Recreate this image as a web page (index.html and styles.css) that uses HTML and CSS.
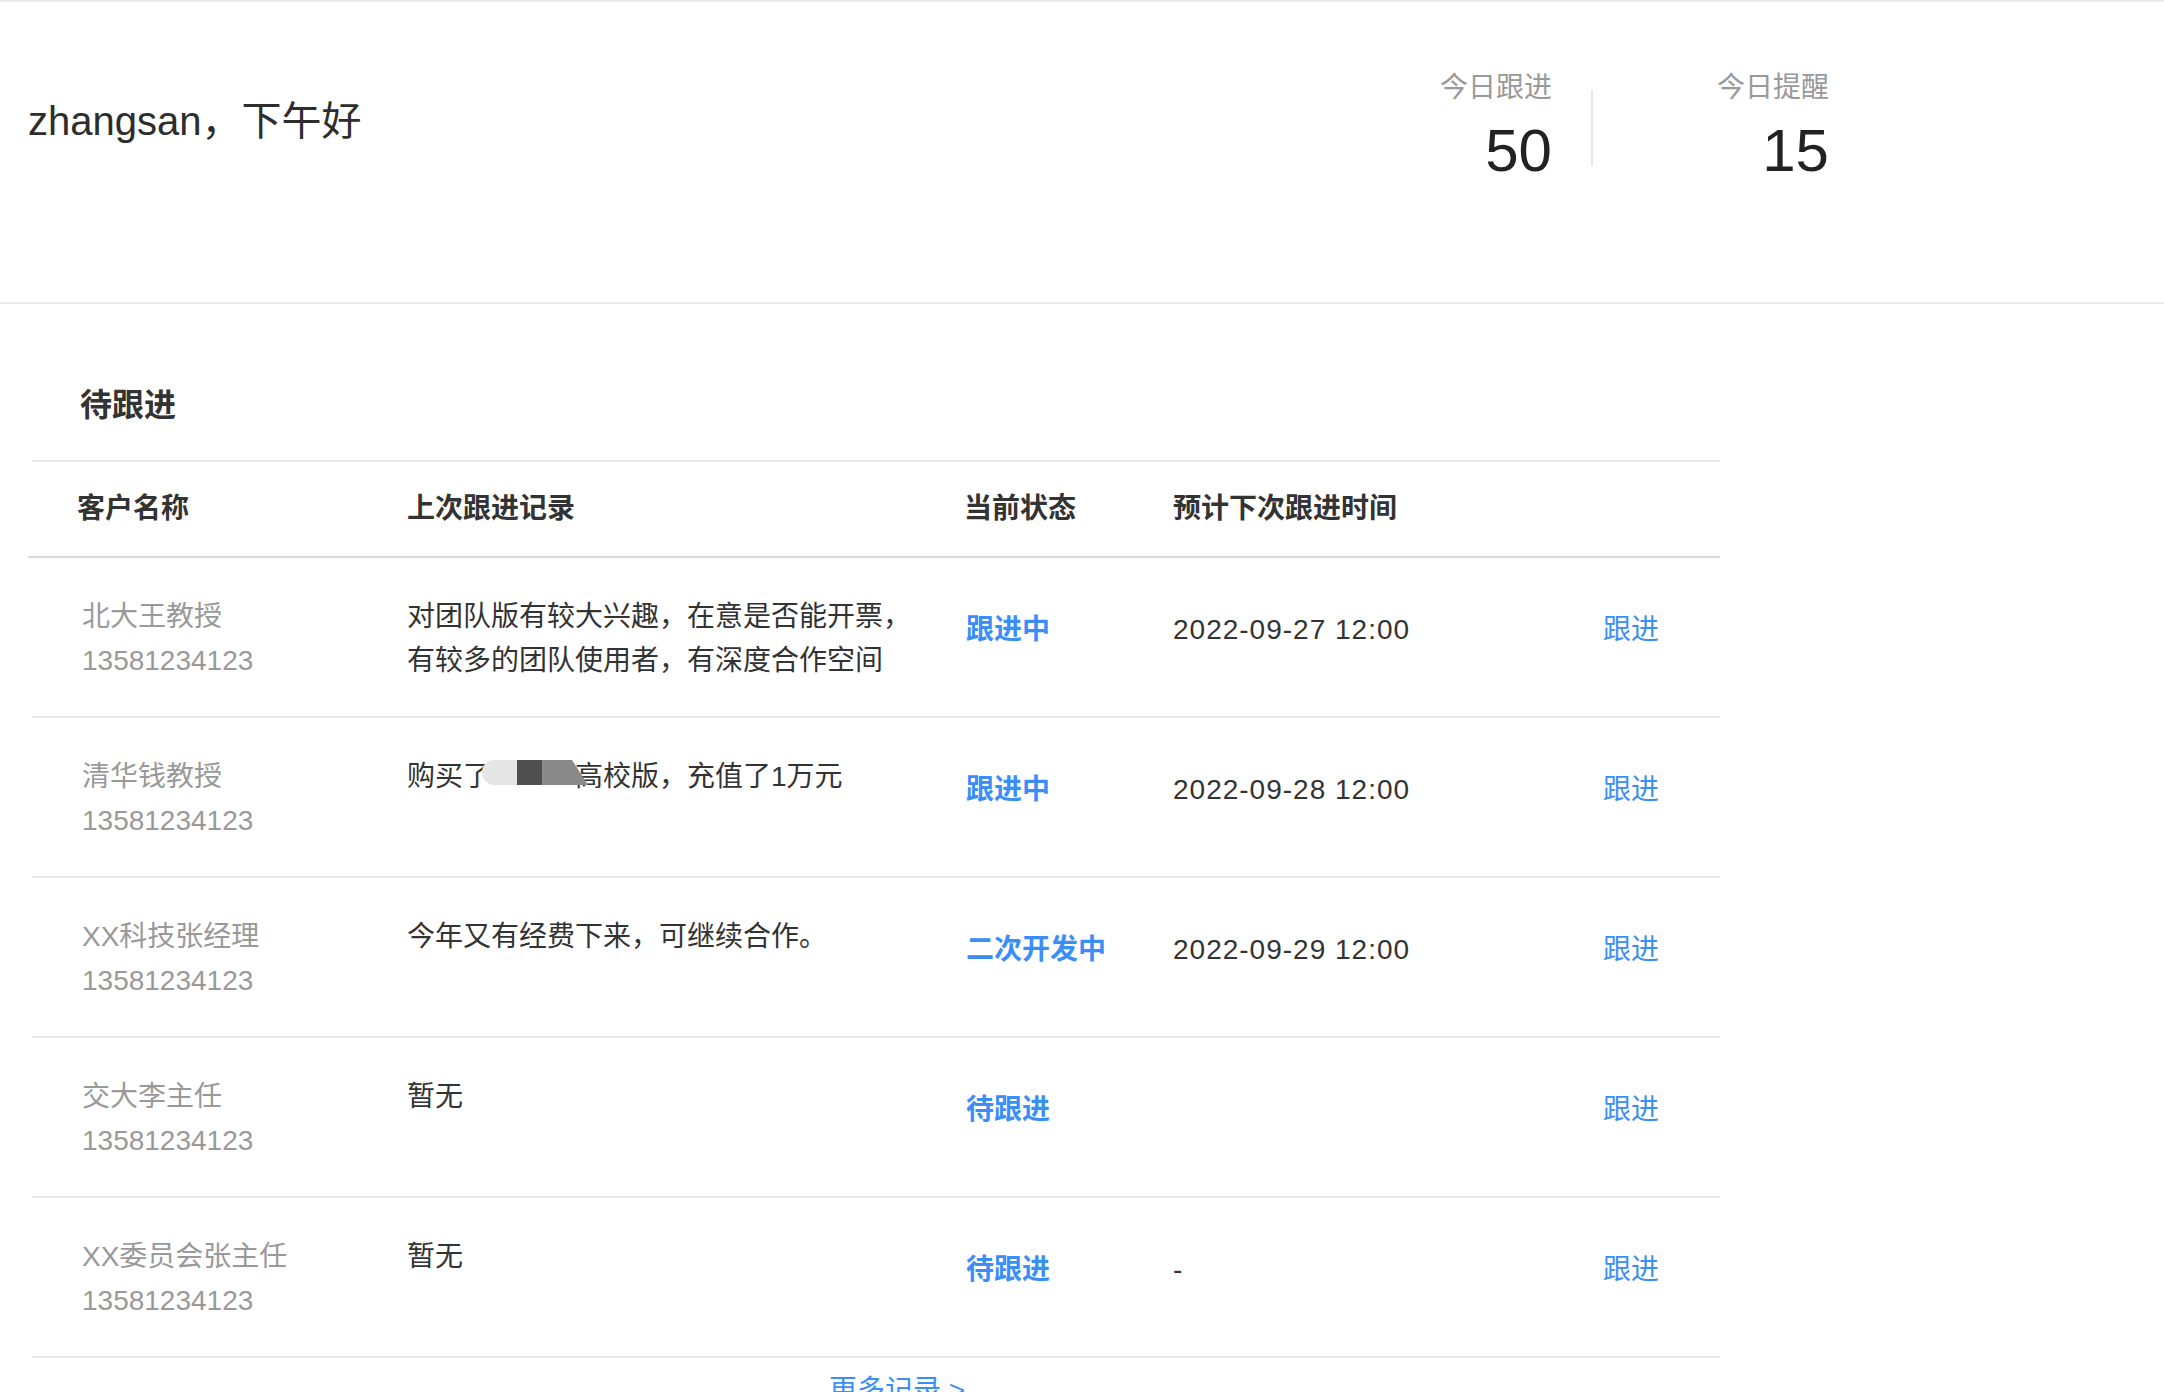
FILE: index.html
```html
<!DOCTYPE html>
<html lang="zh-CN">
<head>
<meta charset="utf-8">
<title>工作台</title>
<link rel="stylesheet" href="styles.css">
</head>
<body>
<header class="top">
  <div class="greeting">zhangsan，下午好</div>
  <div class="stats">
    <div class="stat">
      <div class="stat-label">今日跟进</div>
      <div class="stat-num">50</div>
    </div>
    <div class="stat-divider"></div>
    <div class="stat">
      <div class="stat-label">今日提醒</div>
      <div class="stat-num">15</div>
    </div>
  </div>
</header>

<section class="panel">
  <h2 class="panel-title">待跟进</h2>
  <div class="thead">
    <div>客户名称</div>
    <div>上次跟进记录</div>
    <div>当前状态</div>
    <div>预计下次跟进时间</div>
    <div></div>
  </div>

  <div class="row">
    <div class="cust"><div>北大王教授</div><div>13581234123</div></div>
    <div class="record">对团队版有较大兴趣，在意是否能开票，有较多的团队使用者，有深度合作空间</div>
    <div class="mid status">跟进中</div>
    <div class="mid date">2022-09-27 12:00</div>
    <div class="mid"><a class="link" href="#">跟进</a></div>
  </div>

  <div class="row">
    <div class="cust"><div>清华钱教授</div><div>13581234123</div></div>
    <div class="record">购买了<span class="mosaic"><span class="m-light"></span><span class="m-dark"></span><span class="m-gray"></span><span class="m-tail"></span></span>高校版，充值了1万元</div>
    <div class="mid status">跟进中</div>
    <div class="mid date">2022-09-28 12:00</div>
    <div class="mid"><a class="link" href="#">跟进</a></div>
  </div>

  <div class="row">
    <div class="cust"><div>XX科技张经理</div><div>13581234123</div></div>
    <div class="record">今年又有经费下来，可继续合作。</div>
    <div class="mid status">二次开发中</div>
    <div class="mid date">2022-09-29 12:00</div>
    <div class="mid"><a class="link" href="#">跟进</a></div>
  </div>

  <div class="row">
    <div class="cust"><div>交大李主任</div><div>13581234123</div></div>
    <div class="record">暂无</div>
    <div class="mid status">待跟进</div>
    <div class="mid date"></div>
    <div class="mid"><a class="link" href="#">跟进</a></div>
  </div>

  <div class="row">
    <div class="cust"><div>XX委员会张主任</div><div>13581234123</div></div>
    <div class="record">暂无</div>
    <div class="mid status">待跟进</div>
    <div class="mid date">-</div>
    <div class="mid"><a class="link" href="#">跟进</a></div>
  </div>

  <div class="more"><a class="link" href="#">更多记录 &gt;</a></div>
</section>
</body>
</html>
```

FILE: styles.css
```css
html, body {
  margin: 0;
  padding: 0;
  background: #fff;
}
body {
  font-family: "Liberation Sans", "Noto Sans CJK SC", sans-serif;
  color: #333;
  font-size: 28px;
  line-height: 40px;
}

/* ---------- top header ---------- */
.top {
  height: 300px;
  border-top: 2px solid #e9e9e9;
  border-bottom: 2px solid #e9e9e9;
  padding: 0 335px 0 28px;
  display: flex;
  justify-content: space-between;
  align-items: flex-start;
}
.greeting {
  margin-top: 91px;
  font-size: 40px;
  line-height: 56px;
  color: #2d2d2d;
}
.stats {
  margin-top: 66px;
  display: flex;
  align-items: flex-start;
}
.stat {
  display: flex;
  flex-direction: column;
  align-items: flex-end;
}
.stat-label {
  font-size: 28px;
  line-height: 40px;
  color: #999;
}
.stat-num {
  margin-top: 13px;
  font-size: 60px;
  line-height: 60px;
  color: #222;
}
.stat-divider {
  width: 2px;
  height: 76px;
  margin: 22px 124px 0 39px;
  background: #e6e6e6;
}

/* ---------- panel ---------- */
.panel {
  margin-left: 32px;
  width: 1688px;
}
.panel-title {
  margin: 0;
  padding: 79px 0 33px 48px;
  font-size: 32px;
  line-height: 44px;
  font-weight: bold;
  color: #333;
  border-bottom: 2px solid #e9e9e9;
}
.thead {
  margin-left: -4px;
  padding: 27px 0 27px 49px;
  display: grid;
  grid-template-columns: 330px 557px 209px 430px 1fr;
  font-weight: bold;
  color: #333;
  border-bottom: 2px solid #dadada;
}
.row {
  display: grid;
  grid-template-columns: 325px 559px 207px 430px 1fr;
  padding: 37px 0 33px 50px;
  border-bottom: 2px solid #e9e9e9;
}
.cust {
  line-height: 44px;
  color: #999;
}
.record {
  line-height: 44px;
  padding-right: 39px;
  color: #333;
}
.mid {
  align-self: center;
  margin-bottom: 19px;
  line-height: 40px;
}
.status {
  color: #3a8ef6;
  font-weight: bold;
}
.date {
  color: #333;
  letter-spacing: 1px;
}
.link {
  color: #3a8ef6;
  text-decoration: none;
}

/* redaction blob in record text */
.mosaic {
  position: relative;
  z-index: 1;
  display: inline-flex;
  height: 25px;
  margin: 0 -13px 0 -9px;
  vertical-align: 1px;
}
.m-light {
  width: 35px;
  background: #e6e6e6;
  border-radius: 12px 0 0 12px;
}
.m-dark {
  width: 25px;
  background: #505050;
}
.m-gray {
  width: 30px;
  background: #8a8a8a;
}
.m-tail {
  width: 16px;
  background: #8a8a8a;
  clip-path: polygon(0 0, 0 100%, 100% 100%);
}

.more {
  padding: 13px 0 0 42px;
  text-align: center;
  line-height: 40px;
}
```
